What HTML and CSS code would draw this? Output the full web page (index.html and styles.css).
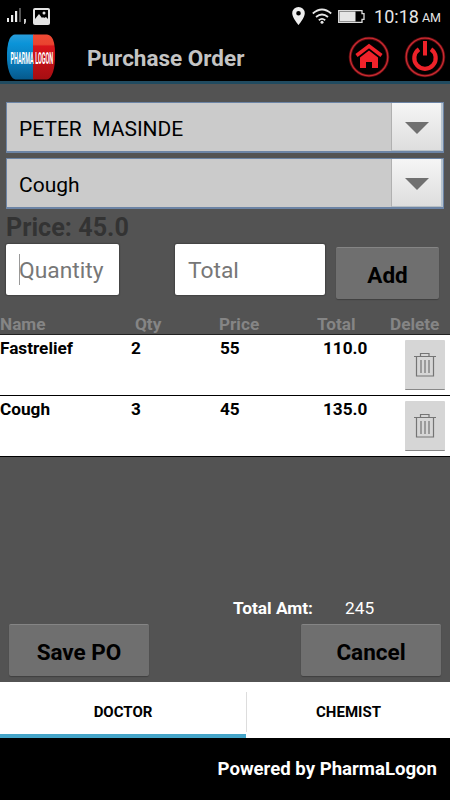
FILE: index.html
```html
<!DOCTYPE html>
<html lang="en">
<head>
    <meta charset="UTF-8">
    <meta name="viewport" content="width=device-width, initial-scale=1.0">
    <title>Purchase Order</title>
    <link rel="stylesheet" href="styles.css">
</head>
<body>
    <div class="status-bar">
        <svg class="signal" width="20" height="16" viewBox="0 0 20 16">
            <path d="M0 10h2v4H0zM4 7h2.200v7H4zM8 3h2.200v11H8z" fill="#eee"/>
            <path d="M12 0h2v14h-2z" fill="#555"/>
            <path d="M17 11h2v3l-1 2h-1z" fill="#ccc"/>
        </svg>
        <svg class="picture" width="17" height="17" viewBox="0 0 17 17">
            <rect width="17" height="17" rx="2" fill="#e4e4e4"/>
            <path d="M2 2h13v9l-2-2-2 1-1-1-1 1-3-4-4 5z" fill="#000"/>
            <circle cx="11" cy="5" r="1.500" fill="#e4e4e4"/>
        </svg>
        <svg class="pin" width="13" height="18" viewBox="0 0 13 18">
            <path fill-rule="evenodd" d="M6.500 0a6.300 6.300 0 0 0-6.300 6.300C.2 11 6.500 18 6.500 18s6.300-7 6.300-11.700A6.300 6.300 0 0 0 6.500 0zm0 4a2.300 2.300 0 1 1 0 4.600 2.300 2.300 0 0 1 0-4.600z" fill="#eee"/>
        </svg>
        <svg class="wifi" width="20" height="16" viewBox="0 0 20 16" fill="none" stroke="#e6e6e6" stroke-width="1.800">
            <path d="M.8 5.500q9.200-8 18.400 0M4 9q6-5 12 0M6.800 12.200q3.200-2.600 6.400 0"/>
            <circle cx="10" cy="14.300" r="1.500" fill="#e6e6e6" stroke="none"/>
        </svg>
        <svg class="battery" width="27" height="13" viewBox="0 0 27 13">
            <path d="M.7.700h23.300v3h2v5.600h-2v3H.7z" fill="none" stroke="#ddd" stroke-width="1.300"/>
            <rect x="1.500" y="1.500" width="16" height="10" fill="#e6e6e6"/>
        </svg>
        <span class="clock">10:18</span>
        <span class="ampm">AM</span>
    </div>

    <header class="header">
        <svg class="logo" width="50" height="46" viewBox="0 0 50 46">
            <defs>
                <linearGradient id="blue" x1="0" y1="0" x2="0" y2="1">
                    <stop offset="0" stop-color="#2a9edb"/>
                    <stop offset=".2" stop-color="#0b94d8"/>
                    <stop offset=".65" stop-color="#0877b5"/>
                    <stop offset="1" stop-color="#06598c"/>
                </linearGradient>
                <linearGradient id="red" x1="0" y1="0" x2="0" y2="1">
                    <stop offset="0" stop-color="#ef4a35"/>
                    <stop offset=".22" stop-color="#e8432f"/>
                    <stop offset=".26" stop-color="#d8141b"/>
                    <stop offset="1" stop-color="#a50e12"/>
                </linearGradient>
            </defs>
            <path d="M27.500.5H9Q6 .5 3.500 5 .5 12 1 26q.5 9 3.500 15 2 4 5 4.500h18z" fill="url(#blue)"/>
            <path d="M27 .5h14q4 .5 6 5 2.500 6 2 20-.5 10-3 15-2 4.500-5 5H27z" fill="url(#red)"/>
            <text class="logo-text" transform="translate(4.500 30) scale(.345 1)">PHARMA LOGON</text>
        </svg>
        <h1>Purchase Order</h1>
        <svg class="round-icon" width="42" height="42" viewBox="0 0 42 42">
            <circle cx="21" cy="21" r="18.800" fill="none" stroke="#5c0c10" stroke-width="3"/>
            <circle cx="21" cy="21" r="18.800" fill="none" stroke="#c92b31" stroke-width="1.300"/>
            <path d="M8.500 19.500 21 10l12.500 9.500" fill="none" stroke="#f0222a" stroke-width="3.600"/>
            <path d="M12 21.500 21 14.500l9 7V32h-6v-6h-6v6h-6z" fill="#f0222a"/>
        </svg>
        <svg class="round-icon" width="42" height="42" viewBox="0 0 42 42">
            <circle cx="21" cy="21" r="18.800" fill="none" stroke="#5c0c10" stroke-width="3"/>
            <circle cx="21" cy="21" r="18.800" fill="none" stroke="#c92b31" stroke-width="1.300"/>
            <path d="M15 13.300a10.700 10.700 0 1 0 12 0" fill="none" stroke="#ee2229" stroke-width="4.200"/>
            <path d="M21 5v14.500" fill="none" stroke="#ee2229" stroke-width="4"/>
        </svg>
    </header>

    <main class="content">
        <div class="spinner">
            <span class="spinner-value">PETER&nbsp; MASINDE</span>
            <span class="spinner-btn"><span class="arrow"></span></span>
        </div>
        <div class="spinner">
            <span class="spinner-value">Cough</span>
            <span class="spinner-btn"><span class="arrow"></span></span>
        </div>

        <div class="price">Price: 45.0</div>

        <div class="entry">
            <div class="field quantity"><span class="caret"></span>Quantity</div>
            <div class="field total">Total</div>
            <div class="btn add">Add</div>
        </div>

        <div class="row table-head">
            <span>Name</span>
            <span>Qty</span>
            <span>Price</span>
            <span>Total</span>
            <span>Delete</span>
        </div>
        <div class="row item">
            <span>Fastrelief</span>
            <span>2</span>
            <span>55</span>
            <span>110.0</span>
            <div class="delete">
                <svg width="22" height="25" viewBox="0 0 22 25" fill="none" stroke="#747474" stroke-width="1.200">
                    <path d="M0 4.500h22M6.500 4V1.500h8.500V4M2.500 5v19h17V5M7 8v13M11 8v13M15 8v13"/>
                </svg>
            </div>
        </div>
        <div class="row item">
            <span>Cough</span>
            <span>3</span>
            <span>45</span>
            <span>135.0</span>
            <div class="delete">
                <svg width="22" height="25" viewBox="0 0 22 25" fill="none" stroke="#747474" stroke-width="1.200">
                    <path d="M0 4.500h22M6.500 4V1.500h8.500V4M2.500 5v19h17V5M7 8v13M11 8v13M15 8v13"/>
                </svg>
            </div>
        </div>

        <div class="amount">
            <span class="amount-label">Total Amt:</span>
            <span class="amount-value">245</span>
        </div>
        <div class="actions">
            <div class="btn">Save PO</div>
            <div class="btn">Cancel</div>
        </div>
    </main>

    <nav class="tabs">
        <div class="tab active">DOCTOR</div>
        <div class="divider"></div>
        <div class="tab">CHEMIST</div>
    </nav>

    <footer class="footer">Powered by PharmaLogon</footer>
</body>
</html>
```
FILE: styles.css
```css
* {
    margin: 0;
    padding: 0;
    box-sizing: border-box;
}

body {
    width: 450px;
    height: 800px;
    display: flex;
    flex-direction: column;
    overflow: hidden;
    background: #000;
    color: #000;
    font-family: Roboto, sans-serif;
    white-space: nowrap;
}

.status-bar {
    height: 32px;
    display: flex;
    align-items: center;
    padding: 0 9px 0 7px;
    color: #e6e6e6;
}

.picture {
    margin-left: 6px;
}

.pin {
    margin-left: auto;
}

.wifi {
    margin-left: 7px;
}

.battery {
    margin-left: 6px;
}

.clock {
    margin-left: 9px;
    font-size: 18px;
}

.ampm {
    margin: 3px 0 0 3px;
    font-size: 12.5px;
}

.header {
    height: 52px;
    display: flex;
    align-items: center;
    padding: 0 4px 0 6px;
    border-bottom: 3px solid #214b60;
}

.header h1 {
    margin: 2px auto 0 31px;
    font-size: 22.5px;
    color: #c4c4c4;
}

.logo-text {
    font-size: 16px;
    font-weight: bold;
    fill: #fff;
}

.round-icon + .round-icon {
    margin-left: 14px;
}

.content {
    height: 598px;
    display: flex;
    flex-direction: column;
    padding-top: 18px;
    background: #535353;
}

.spinner {
    height: 51px;
    display: flex;
    justify-content: space-between;
    margin: 0 6px 5px;
    border: 1px solid #6c84a5;
    border-bottom-width: 2px;
    background: #cbcbcb;
}

.spinner-value {
    padding: 0 12px;
    line-height: 52px;
    font-size: 21px;
}

.spinner-btn {
    width: 52px;
    display: flex;
    align-items: center;
    justify-content: center;
    border-left: 1px solid #b0b0b0;
    border-right: 2px solid #b5c3cf;
    border-bottom: 1px solid #b8bfc4;
    background: linear-gradient(#f5f5f5, #dedede);
}

.arrow {
    margin-top: 2px;
    border: 12px solid transparent;
    border-top-color: #707070;
    border-bottom: 0;
}

.price {
    height: 30px;
    padding-left: 6px;
    line-height: 27px;
    font-size: 25.2px;
    font-weight: bold;
    color: #333;
}

.entry {
    height: 70px;
    display: flex;
    align-items: flex-start;
    padding-left: 6px;
}

.field {
    height: 51px;
    padding-left: 13px;
    line-height: 54px;
    border-radius: 2px;
    background: #fff;
    box-shadow: 0 0 1px 1px #444;
    font-size: 22.8px;
    color: #777;
}

.quantity {
    width: 113px;
    display: flex;
}

.caret {
    width: 1px;
    height: 31px;
    margin: 10px -1px 0 0;
    background: #999;
}

.total {
    width: 150px;
    margin-left: 56px;
}

.btn {
    width: 140px;
    height: 52px;
    line-height: 54px;
    border-top: 1px solid #858585;
    border-radius: 2px;
    background: #6f6f6f;
    box-shadow: 0 1px 1px #404040;
    text-align: center;
    font-size: 22.5px;
    font-weight: bold;
}

.add {
    width: 103px;
    margin: 3px 0 0 11px;
}

.row {
    display: grid;
    grid-template-columns: 131px 89px 103px 82px 40px;
    font-size: 17.2px;
    font-weight: bold;
}

.table-head {
    height: 21px;
    grid-template-columns: 135px 84px 98px 73px 60px;
    line-height: 20px;
    border-bottom: 1px solid #222;
    color: #858585;
}

.item {
    height: 61px;
    line-height: 26px;
    border-bottom: 1px solid #000;
    background: #fff;
}

.delete {
    height: 50px;
    display: flex;
    align-items: center;
    justify-content: center;
    margin-top: 5px;
    border-bottom: 1px solid #888;
    border-radius: 1px;
    background: #d6d6d6;
}

.amount {
    display: flex;
    margin-top: auto;
    padding-left: 233px;
    line-height: 20px;
    font-size: 17.3px;
    color: #fff;
}

.amount-label {
    width: 112px;
    font-weight: bold;
}

.actions {
    display: flex;
    justify-content: space-between;
    padding: 6px 9px;
}

.tabs {
    height: 56px;
    display: flex;
    background: #fff;
}

.tab {
    flex: 1;
    line-height: 61px;
    text-align: center;
    font-size: 15px;
    font-weight: bold;
}

.tab.active {
    flex: 0 0 246px;
    border-bottom: 4px solid #45a5c9;
}

.divider {
    width: 1px;
    margin: 10px 0 6px;
    background: #ddd;
}

.footer {
    flex: 1;
    padding-right: 13px;
    line-height: 62px;
    text-align: right;
    font-size: 18.6px;
    font-weight: bold;
    color: #fff;
}
```
